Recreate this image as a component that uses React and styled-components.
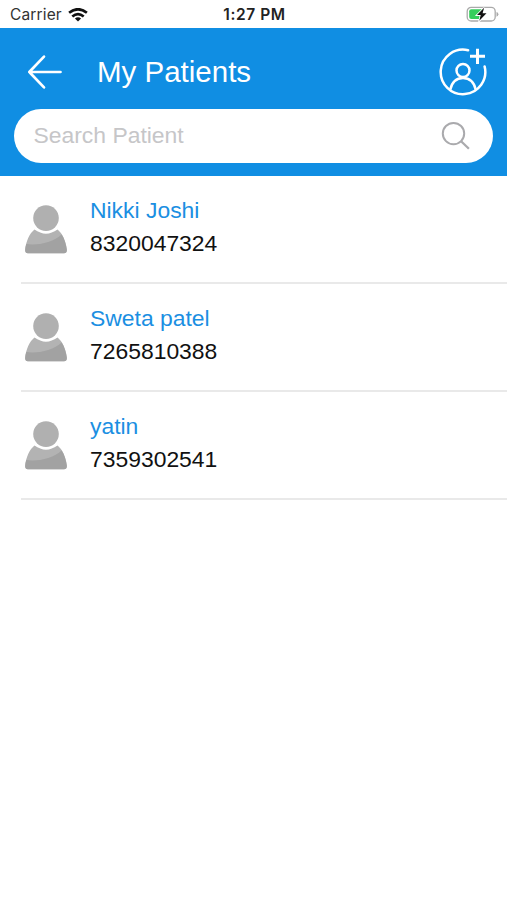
import React from 'react';
import styled, { createGlobalStyle } from 'styled-components';

const GlobalStyle = createGlobalStyle`
  * { box-sizing: border-box; }
  body { margin: 0; background: #fff; }
`;

const Screen = styled.div`
  width: 100%;
  max-width: 507px;
  min-height: 900px;
  background: #fff;
  font-family: "Liberation Sans", Arial, Helvetica, sans-serif;
`;

const StatusBar = styled.div`
  height: 28px;
  display: grid;
  grid-template-columns: 1fr auto 1fr;
  align-items: center;
  padding: 2px 8px 0 10px;
  font-family: Inter, sans-serif;
  color: #222;
`;

const Carrier = styled.div`
  display: flex;
  align-items: center;
  gap: 6px;
  font-size: 15.5px;
  letter-spacing: 0.15px;
  line-height: 20px;
  color: #333;
`;

const Clock = styled.div`
  font-size: 15.5px;
  font-weight: 600;
  line-height: 20px;
  letter-spacing: 0.6px;
`;

const Battery = styled.div`
  display: flex;
  justify-content: flex-end;
`;

const Header = styled.header`
  height: 148px;
  background: #108ee3;
  padding: 0 14px;
`;

const TitleBar = styled.div`
  height: 81px;
  display: flex;
  align-items: center;
  padding: 6px 4px 0 11px;
`;

const Title = styled.h1`
  flex: 1;
  margin: 0 0 0 34px;
  font-size: 29.5px;
  font-weight: 400;
  line-height: 36px;
  color: #fff;
`;

const IconButton = styled.button`
  display: flex;
  padding: 0;
  border: 0;
  background: none;
`;

const SearchBar = styled.div`
  height: 54px;
  border-radius: 27px;
  background: #fff;
  display: flex;
  align-items: center;
  justify-content: space-between;
  padding: 0 22px 0 19.5px;
  font-size: 22.9px;
  line-height: 28px;
  color: #c6c6c8;
`;

const Placeholder = styled.span`
  padding-bottom: 2px;
`;

const PatientList = styled.ul`
  margin: 0;
  padding: 0 0 0 21px;
  list-style: none;
`;

const PatientRow = styled.li`
  height: 108px;
  display: flex;
  align-items: flex-start;
  gap: 22px;
  padding: 17px 0 0 3px;
  border-bottom: 2px solid #e9e9e9;
`;

const Avatar = styled.svg`
  margin-top: 11px;
  flex: none;
`;

const PatientName = styled.div`
  font-size: 22.9px;
  line-height: 34px;
  color: #1b8fe2;
`;

const PatientPhone = styled.div`
  font-size: 22.9px;
  line-height: 33px;
  color: #111;
`;

const patients = [
  { name: 'Nikki Joshi', phone: '8320047324' },
  { name: 'Sweta patel', phone: '7265810388' },
  { name: 'yatin', phone: '7359302541' },
];

function WifiIcon() {
  return (
    <svg width="20" height="15" viewBox="0 0 20 15" fill="none" stroke="#111" strokeWidth="2.7">
      <path d="M1.1 4.8Q10 -2.3 18.9 4.8" />
      <path d="M4.3 8.5Q10 3.7 15.7 8.5" />
      <path d="M10 13.5L6.9 10.5Q10 8 13.1 10.5Z" fill="#111" stroke="none" />
    </svg>
  );
}

function BatteryIcon() {
  return (
    <svg width="34" height="18" viewBox="0 0 34 18">
      <rect x="2.2" y="1.4" width="28" height="13.6" rx="4" fill="#fff" stroke="#aaa" strokeWidth="1.3" />
      <path d="M6.3 3.3H17V13.1H6.3Q4.2 13.1 4.2 11.1V5.3Q4.2 3.3 6.3 3.3Z" fill="#36ce5c" />
      <path d="M31.5 6Q33.4 6.5 33.4 8.3T31.5 10.8Z" fill="#aaa" />
      <path d="M19.1 1.8L12 9.1H15.7L14.3 14.8L21.5 7.2H17.6Z" fill="#111" stroke="#fff" strokeWidth="1.8" paintOrder="stroke" />
    </svg>
  );
}

function BackIcon() {
  return (
    <svg width="38" height="36" viewBox="0 0 38 36" fill="none" stroke="#fff" strokeWidth="2.7" strokeLinecap="round" strokeLinejoin="round">
      <path d="M19 2.6L4.3 18L19 33.4M4.3 18H35.5" />
    </svg>
  );
}

function AddPatientIcon() {
  return (
    <svg width="50" height="50" viewBox="0 0 50 50" fill="none" stroke="#fff" strokeWidth="2.5">
      <path d="M29.1 3.2A22.3 22.3 0 1 0 45.6 19.4" strokeLinecap="round" />
      <circle cx="24" cy="23.5" r="6.5" />
      <path d="M11.2 42.7C13 35 18 31 24 31S35 35 36.8 42.7" />
      <path d="M38.5 1.7V16.9M31 9.3H46" strokeWidth="3" />
    </svg>
  );
}

function SearchIcon() {
  return (
    <svg width="30" height="30" viewBox="0 0 30 30" fill="none" stroke="#aaaaad" strokeWidth="2">
      <circle cx="12.5" cy="12.6" r="10.7" />
      <path d="M20.1 20.2L27.9 27.8" strokeWidth="2.3" />
    </svg>
  );
}

function AvatarIcon() {
  return (
    <Avatar width="44" height="50" viewBox="0 0 44 50">
      <path d="M10.5 25.5Q22 33.8 33.5 25.5C38.5 29.5 41.8 37 42.8 45.5Q43.2 49.2 40 49.2H4Q.8 49.2 1.2 45.5C2.2 37 5.5 29.5 10.5 25.5Z" fill="#b3b3b3" />
      <path d="M2.3 40C13 41.7 29.8 38.3 37.6 30.4C40.3 34.5 42.2 40.4 42.8 45.5Q43.2 49.2 40 49.2H4Q.8 49.2 1.2 45.5Q1.5 42.6 2.3 40Z" fill="#a2a2a2" />
      <circle cx="22" cy="14.1" r="12.8" fill="#b0b0b0" />
    </Avatar>
  );
}

export default function App() {
  return (
    <Screen>
      <GlobalStyle />
      <StatusBar>
        <Carrier>Carrier<WifiIcon /></Carrier>
        <Clock>1:27 PM</Clock>
        <Battery><BatteryIcon /></Battery>
      </StatusBar>
      <Header>
        <TitleBar>
          <IconButton aria-label="Back"><BackIcon /></IconButton>
          <Title>My Patients</Title>
          <IconButton aria-label="Add patient"><AddPatientIcon /></IconButton>
        </TitleBar>
        <SearchBar>
          <Placeholder>Search Patient</Placeholder>
          <SearchIcon />
        </SearchBar>
      </Header>
      <PatientList>
        {patients.map(({ name, phone }) => (
          <PatientRow key={phone}>
            <AvatarIcon />
            <div>
              <PatientName>{name}</PatientName>
              <PatientPhone>{phone}</PatientPhone>
            </div>
          </PatientRow>
        ))}
      </PatientList>
    </Screen>
  );
}
